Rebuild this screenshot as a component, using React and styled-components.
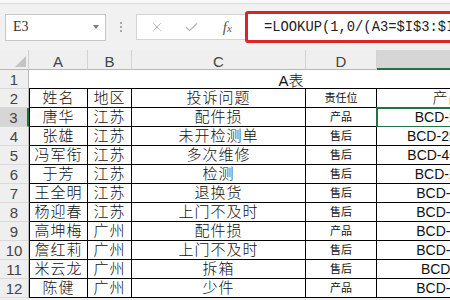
import React from 'react'
import styled, { createGlobalStyle } from 'styled-components'
import { X, Check } from 'lucide-react'

const GlobalStyle = createGlobalStyle`
  body {
    margin: 0;
    background: #fff;
  }
`

const Sheet = styled.div`
  width: 450px;
  height: 300px;
  overflow: hidden;
  background: #f1f1f1;
  font-family: "Liberation Sans", "Noto Sans CJK SC", sans-serif;
`

const TopStrip = styled.div`
  height: 3px;
  background: #f8f8f8;
  border-bottom: 1px solid #d9d9d9;
`

const FormulaRow = styled.div`
  display: flex;
  align-items: center;
  height: 46px;
  padding-left: 5px;
`

const NameBox = styled.div`
  box-sizing: border-box;
  width: 101px;
  height: 27px;
  display: flex;
  align-items: center;
  justify-content: space-between;
  padding: 0 6px 0 7px;
  background: #fff;
  border: 1px solid #c6c6c6;
  font-family: "Liberation Serif", serif;
  font-size: 14px;
  color: #333;
`

const Caret = styled.span`
  width: 0;
  height: 0;
  border-left: 3.5px solid transparent;
  border-right: 3.5px solid transparent;
  border-top: 4px solid #7a7a7a;
`

const Dots = styled.div`
  display: flex;
  flex-direction: column;
  gap: 2px;
  margin: 0 14px 0 14px;

  span {
    width: 2px;
    height: 2px;
    background: #a8a8a8;
  }
`

const ButtonBox = styled.div`
  box-sizing: border-box;
  width: 109px;
  height: 26px;
  display: flex;
  align-items: center;
  padding-left: 2px;
  background: #fff;
  border: 1px solid #d4d4d4;
  border-right: none;
`

const BarButton = styled.div`
  width: 36px;
  display: flex;
  justify-content: center;
  align-items: center;
  color: #b4b4b4;
`

const Fx = styled.i`
  font-family: "Liberation Serif", serif;
  font-size: 15px;
  color: #555;

  small {
    font-size: 11px;
  }
`

const FormulaInput = styled.div`
  box-sizing: border-box;
  flex: 1;
  height: 32px;
  margin-right: -12px;
  display: flex;
  align-items: center;
  padding-left: 16px;
  background: #fff;
  border: 3px solid #d9252a;
  border-radius: 3px;
  overflow: hidden;
  white-space: nowrap;
  font-family: "Liberation Mono", monospace;
  font-size: 13.8px;
  color: #222;
`

const Grid = styled.div`
  display: grid;
  grid-template-columns: 29px 59px 44px 174px 71px 176px;
  grid-template-rows: 20px repeat(12, 19px);
  width: max-content;
`

const Corner = styled.div`
  box-sizing: border-box;
  display: flex;
  align-items: flex-end;
  justify-content: flex-end;
  padding: 0 2px 2px 0;
  background: #efefef;
  border-right: 1px solid #cfcfcf;
  border-bottom: 1px solid #b8b8b8;
`

const ColHeader = styled.div`
  box-sizing: border-box;
  display: flex;
  justify-content: center;
  align-items: center;
  padding-top: 3px;
  background: ${p => (p.$active ? '#d6d6d6' : '#efefef')};
  border-right: 1px solid #d4d4d4;
  border-bottom: ${p => (p.$active ? '2px solid #217346' : '1px solid #b8b8b8')};
  font-size: 15px;
  color: #444;
`

const RowHeader = styled.div`
  box-sizing: border-box;
  display: flex;
  justify-content: center;
  align-items: center;
  background: ${p => (p.$active ? '#d6d6d6' : '#efefef')};
  border-bottom: 1px solid #d9d9d9;
  border-right: ${p => (p.$active ? '2px solid #217346' : '1px solid #b8b8b8')};
  font-size: 15px;
  color: #444;
`

const TitleCell = styled.div`
  grid-column: 2 / span 5;
  box-sizing: border-box;
  display: flex;
  justify-content: center;
  align-items: center;
  background: #fff;
  border-bottom: 1px solid #000;
  font-size: 15px;
  font-weight: 300;
  color: #111;
`

const Cell = styled.div`
  box-sizing: border-box;
  display: flex;
  justify-content: center;
  align-items: center;
  overflow: hidden;
  white-space: nowrap;
  background: #fff;
  border-right: 1px solid #000;
  border-bottom: 1px solid #000;
  border-left: ${p => (p.$first ? '1px solid #000' : 'none')};
  font-size: ${p => (p.$small ? '11px' : p.$latin ? '14px' : '15px')};
  font-weight: ${p => (p.$latin || p.$small ? 400 : 300)};
  letter-spacing: ${p => (p.$latin || p.$small ? '0' : '1px')};
  line-height: 18px;
  color: #111;
  outline: ${p => (p.$selected ? '2px solid #217346' : 'none')};
  outline-offset: -1px;
`

const columns = ['A', 'B', 'C', 'D', 'E']

const rows = [
  ['姓名', '地区', '投诉问题', '责任位', '产品型号'],
  ['唐华', '江苏', '配件损', '产品', 'BCD-216WDPV'],
  ['张雄', '江苏', '未开检测单', '售后', 'BCD-258WDPM/A'],
  ['冯军衔', '江苏', '多次维修', '售后', 'BCD-455WDGK/A'],
  ['于芳', '江苏', '检测', '售后', 'BCD-216WDPV'],
  ['王全明', '江苏', '退换货', '售后', 'BCD-206TMPS'],
  ['杨迎春', '江苏', '上门不及时', '售后', 'BCD-206TMPS'],
  ['高坤梅', '广州', '配件损', '产品', 'BCD-206TMPS'],
  ['詹红莉', '广州', '上门不及时', '售后', 'BCD-206TMPS'],
  ['米云龙', '广州', '拆箱', '售后', 'BCD-190TMP'],
  ['陈健', '广州', '少件', '产品', 'BCD-206TMPS'],
]

export default function App() {
  return (
    <Sheet>
      <GlobalStyle />
      <TopStrip />
      <FormulaRow>
        <NameBox>
          E3
          <Caret />
        </NameBox>
        <Dots>
          <span />
          <span />
          <span />
        </Dots>
        <ButtonBox>
          <BarButton>
            <X size={14} strokeWidth={1.6} />
          </BarButton>
          <BarButton>
            <Check size={15} strokeWidth={2} />
          </BarButton>
          <BarButton>
            <Fx>f<small>x</small></Fx>
          </BarButton>
        </ButtonBox>
        <FormulaInput>=LOOKUP(1,0/(A3=$I$3:$I$12),$E$3:$E$12)</FormulaInput>
      </FormulaRow>

      <Grid>
        <Corner>
          <svg width="11" height="11" viewBox="0 0 11 11">
            <polygon points="11,0 11,11 0,11" fill="#c4c4c4" />
          </svg>
        </Corner>
        {columns.map(c => (
          <ColHeader key={c} $active={c === 'E'}>{c}</ColHeader>
        ))}

        <RowHeader>1</RowHeader>
        <TitleCell>A表</TitleCell>

        {rows.map((row, i) => (
          <React.Fragment key={i}>
            <RowHeader $active={i === 1}>{i + 2}</RowHeader>
            {row.map((value, j) => (
              <Cell
                key={j}
                $first={j === 0}
                $small={j === 3}
                $latin={j === 4 && i > 0}
                $selected={j === 4 && i === 1}
              >
                {value}
              </Cell>
            ))}
          </React.Fragment>
        ))}
      </Grid>
    </Sheet>
  )
}
